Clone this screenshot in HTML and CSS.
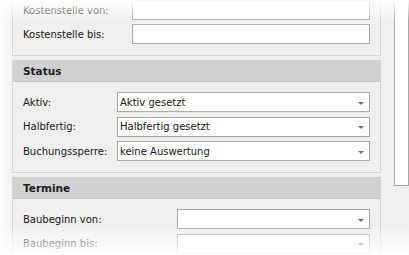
FILE: index.html
```html
<!DOCTYPE html>
<html>
<head>
<meta charset="utf-8">
<link rel="stylesheet" href="styles.css">
</head>
<body>
<div class="page">
  <div class="content">
    <section class="panel panel-first">
      <div class="body body-kst">
        <div class="row"><span class="label">Kostenstelle von:</span><div class="field"></div></div>
        <div class="row"><span class="label">Kostenstelle bis:</span><div class="field"></div></div>
      </div>
    </section>
    <section class="panel">
      <div class="head">Status</div>
      <div class="body body-status">
        <div class="row"><span class="label">Aktiv:</span><div class="field select"><span>Aktiv gesetzt</span><i class="arrow"></i></div></div>
        <div class="row"><span class="label">Halbfertig:</span><div class="field select"><span>Halbfertig gesetzt</span><i class="arrow"></i></div></div>
        <div class="row"><span class="label">Buchungssperre:</span><div class="field select"><span>keine Auswertung</span><i class="arrow"></i></div></div>
      </div>
    </section>
    <section class="panel">
      <div class="head">Termine</div>
      <div class="body body-termine">
        <div class="row"><span class="label">Baubeginn von:</span><div class="field select"><span></span><i class="arrow"></i></div></div>
        <div class="row"><span class="label">Baubeginn bis:</span><div class="field select"><span></span><i class="arrow"></i></div></div>
      </div>
    </section>
  </div>
  <div class="scroll"><div class="thumb"></div></div>
</div>
<div class="fade fade-top"></div>
<div class="fade fade-bottom"></div>
<div class="fade fade-left"></div>
</body>
</html>
```
FILE: styles.css
```css
html, body {
  margin: 0;
  padding: 0;
  width: 409px;
  height: 255px;
  overflow: hidden;
}
body {
  background: #efefef;
  font-family: "DejaVu Sans", Tahoma, sans-serif;
  font-size: 10px;
  color: #161616;
  position: relative;
}
.page {
  display: flex;
  align-items: flex-start;
}
.content {
  margin-left: 12px;
  width: 369px;
  display: flex;
  flex-direction: column;
  gap: 4px;
}
.panel {
  border: 1px solid #d3d3d3;
  background: #efefef;
}
.panel-first {
  margin-top: -12px;
  border-top: none;
}
.head {
  height: 20px;
  line-height: 20px;
  background: #d1d1d1;
  border-bottom: 1px solid #c6c6c6;
  font-weight: bold;
  font-size: 10.5px;
  padding-left: 10px;
  color: #1b1b1b;
}
.body {
  padding: 10px 10px 10px 10px;
  display: flex;
  flex-direction: column;
  gap: 4.5px;
}
.body-kst {
  padding-top: 12px;
  padding-bottom: 11px;
  gap: 4px;
}
.body-status {
  padding-bottom: 11px;
}
.row {
  display: flex;
  align-items: center;
  height: 20px;
}
.label {
  flex: none;
}
.body-kst .label { width: 109px; }
.body-status .label { width: 94px; }
.body-termine .label { width: 154px; }
.field {
  flex: 1;
  height: 18px;
  border: 1px solid #a9a9a9;
  background: #ffffff;
  display: flex;
  align-items: center;
  padding-left: 2px;
}
.select span {
  flex: 1;
}
.arrow {
  width: 0;
  height: 0;
  border-left: 3px solid transparent;
  border-right: 3px solid transparent;
  border-top: 3px solid #707070;
  margin-right: 5px;
  position: relative;
  top: 1px;
}
.scroll {
  margin-left: 13px;
  width: 15px;
}
.thumb {
  margin-top: -10px;
  height: 194px;
  border: 1px solid #a6a6a6;
  background: #ffffff;
}
.fade {
  position: absolute;
  pointer-events: none;
}
.fade-top {
  left: 0; right: 0; top: 0;
  height: 22px;
  background: linear-gradient(to bottom, rgba(255,255,255,0.95), rgba(255,255,255,0));
}
.fade-bottom {
  left: 0; right: 0; bottom: 0;
  height: 30px;
  background: linear-gradient(to top, rgba(255,255,255,0.95), rgba(255,255,255,0));
}
.fade-left {
  left: 0; top: 0; bottom: 0;
  width: 14px;
  background: linear-gradient(to right, rgba(255,255,255,0.9), rgba(255,255,255,0));
}
```
